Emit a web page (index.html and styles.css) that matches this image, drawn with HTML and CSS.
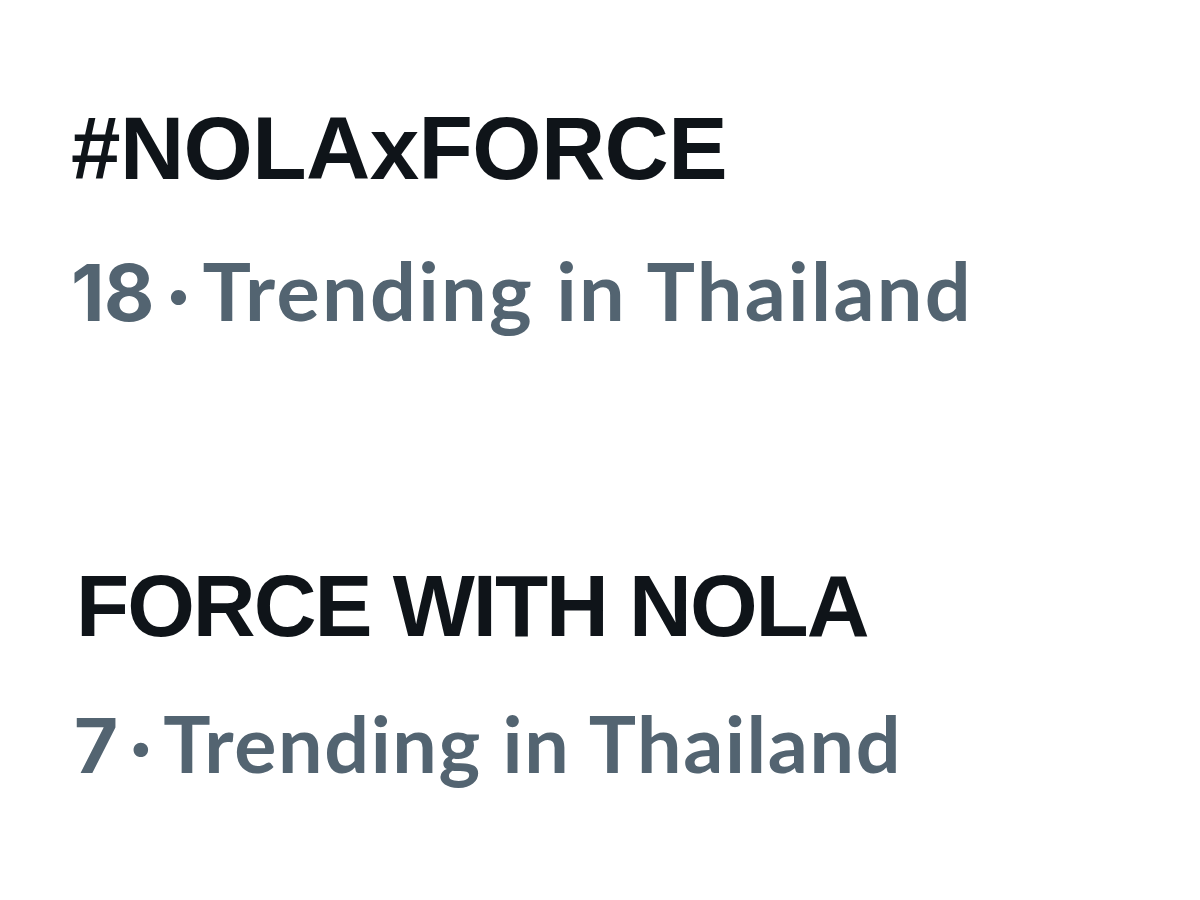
FILE: index.html
```html
<!DOCTYPE html>
<html>
<head>
<meta charset="utf-8">
<link rel="stylesheet" href="styles.css">
</head>
<body>
<div class="list">
  <div class="trend">
    <div class="title">#NOLAxFORCE</div>
    <div class="meta"><span class="rank">18</span><span class="sep">·</span><span class="where">Trending in Thailand</span></div>
  </div>
  <div class="trend second">
    <div class="title">FORCE WITH NOLA</div>
    <div class="meta"><span class="rank">7</span><span class="sep">·</span><span class="where">Trending in Thailand</span></div>
  </div>
</div>
</body>
</html>
```

FILE: styles.css
```css
html, body {
  margin: 0;
  padding: 0;
  background: #ffffff;
}
.list {
  display: flex;
  flex-direction: column;
  padding: 104px 0 80px 71px;
  gap: 230px;
}
.trend {
  display: flex;
  flex-direction: column;
  gap: 56px;
}
.title {
  font-family: "Liberation Sans", Arial, sans-serif;
  font-weight: 700;
  font-size: 89px;
  line-height: 1;
  letter-spacing: -0.6px;
  color: #0f1419;
}
.meta {
  font-family: Lato, sans-serif;
  font-weight: 700;
  font-size: 81px;
  line-height: 1;
  color: #536471;
  white-space: nowrap;
}
.rank {
  font-family: Inter, "Liberation Sans", sans-serif;
  font-size: 78px;
  letter-spacing: -1px;
}
.sep {
  font-size: 80px;
  line-height: 0;
  margin: 0 13px 0 14px;
}
.where {
  letter-spacing: 2.3px;
}
.second {
  gap: 54px;
}
.second .title {
  font-size: 87px;
  letter-spacing: -2px;
  padding-left: 5px;
}
.second .meta {
  font-size: 79px;
  padding-left: 3px;
}
.second .rank {
  font-size: 76px;
}
.second .sep {
  font-size: 77px;
  margin: 0 12px 0 13px;
}
.second .where {
  letter-spacing: 1.6px;
}
```
